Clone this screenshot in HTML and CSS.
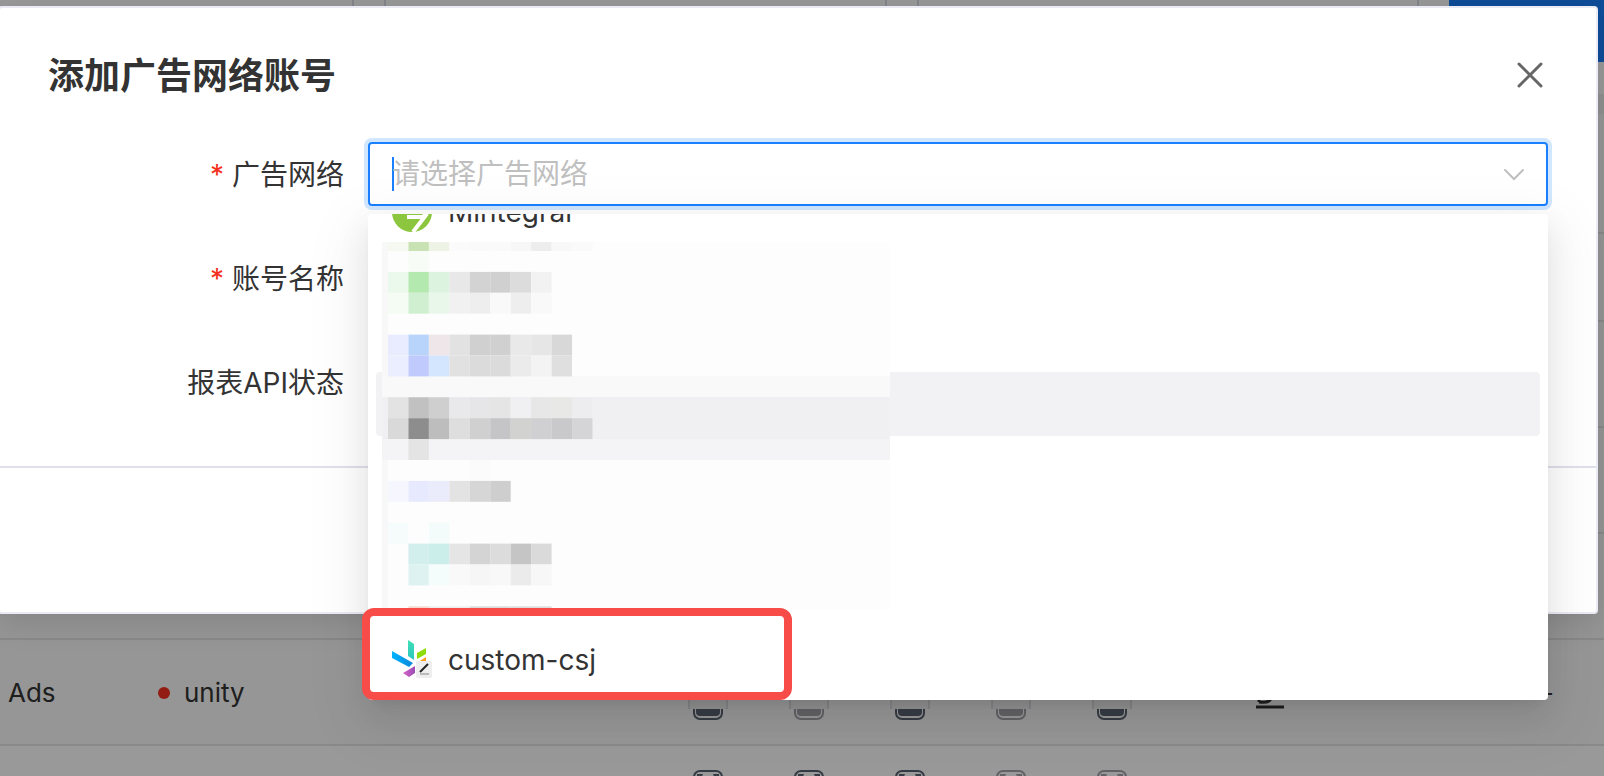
FILE: index.html
```
<!DOCTYPE html>
<html lang="zh-CN">
<head>
<meta charset="UTF-8">
<meta name="viewport" content="width=device-width, initial-scale=1.0">
<title>添加广告网络账号</title>
<link rel="stylesheet" href="styles.css">
</head>
<body>
    <svg width="0" height="0" class="sprite">
        <symbol id="device" viewBox="0 0 40 56">
            <rect x="6" y="1" width="28" height="54" rx="6" fill="none" stroke="currentColor" stroke-width="2"/>
            <path d="M9 4h6q-1 4-6 5zM31 4h-6q1 4 6 5z" fill="currentColor"/>
            <path d="M8 40h24v8q0 4-4 4H12q-4 0-4-4z" fill="currentColor"/>
            <path d="M0 10h40v35H0z" fill="#f4f4f4"/>
            <path d="M1 10v35M39 10v35" stroke="#dcdce2" stroke-width="2"/>
        </symbol>
    </svg>

    <!-- Page behind the dialog -->
    <div class="page">
        <div class="filters">
            <input type="text" class="filter first" aria-label="filter 1">
            <input type="text" class="filter" aria-label="filter 2">
            <input type="text" class="filter" aria-label="filter 3">
            <button type="button" class="btn-search" aria-label="search"></button>
        </div>
        <div class="panel">
            <table class="accounts">
                <colgroup>
                    <col class="col-name"><col class="col-account">
                    <col class="col-icon"><col class="col-icon"><col class="col-icon"><col class="col-icon"><col class="col-icon">
                    <col class="col-edit"><col>
                </colgroup>
                <tr class="toolbar"><td colspan="9"></td></tr>
                <tr class="head"><td colspan="9"></td></tr>
                <tr><td colspan="9"></td></tr>
                <tr><td colspan="9"></td></tr>
                <tr><td colspan="9"></td></tr>
                <tr>
                    <td class="name">Unity Ads</td>
                    <td><span class="dot"></span>unity</td>
                    <td class="icon"><svg><use href="#device"/></svg></td>
                    <td class="icon off"><svg><use href="#device"/></svg></td>
                    <td class="icon"><svg><use href="#device"/></svg></td>
                    <td class="icon off"><svg><use href="#device"/></svg></td>
                    <td class="icon"><svg><use href="#device"/></svg></td>
                    <td class="edit"><svg width="30" height="34" viewBox="0 0 30 34"><path d="M4 27V20L20 4l7 7-13 15q-3 2-10 1M1 32h28" fill="none" stroke="#333" stroke-width="3"/></svg></td>
                    <td class="more">—</td>
                </tr>
                <tr>
                    <td></td>
                    <td></td>
                    <td class="icon"><svg><use href="#device"/></svg></td>
                    <td class="icon"><svg><use href="#device"/></svg></td>
                    <td class="icon"><svg><use href="#device"/></svg></td>
                    <td class="icon off"><svg><use href="#device"/></svg></td>
                    <td class="icon off"><svg><use href="#device"/></svg></td>
                    <td></td>
                    <td></td>
                </tr>
            </table>
        </div>
    </div>

    <div class="mask">
        <div class="dialog" role="dialog" aria-labelledby="dialogTitle">
            <div class="dialog-header">
                <h2 id="dialogTitle">添加广告网络账号</h2>
                <button type="button" class="close" aria-label="关闭">
                    <svg width="26" height="26" viewBox="0 0 26 26"><path d="M2 2l22 22M24 2L2 24" stroke="#666" stroke-width="3" stroke-linecap="round"/></svg>
                </button>
            </div>
            <form>
                <div class="form-item">
                    <label for="network" class="required">广告网络</label>
                    <div class="control">
                        <div class="select">
                            <input type="text" id="network" role="combobox" aria-expanded="true" aria-controls="networkList" placeholder="请选择广告网络">
                            <svg width="22" height="14" viewBox="0 0 22 14"><path d="M2 3l9 9 9-9" fill="none" stroke="#bfbfbf" stroke-width="2" stroke-linecap="round"/></svg>
                        </div>
                        <div class="dropdown">
                            <ul id="networkList" role="listbox">
                                <li role="option">
                                    <svg width="40" height="40" viewBox="0 0 40 40"><circle cx="20" cy="20" r="20" fill="#8cc63f"/><path d="M15 25h17M24 14l10 9-13 17" fill="none" stroke="#fff" stroke-width="4"/></svg>
                                    Mintegral
                                </li>
                                <li role="option"></li>
                                <li role="option"></li>
                                <li role="option" class="active"></li>
                                <li role="option"></li>
                                <li role="option"></li>
                                <li role="option"></li>
                                <li role="option">
                                    <svg width="40" height="40" viewBox="0 0 40 40">
                                        <defs>
                                            <linearGradient id="g1" x2="0" y2="1"><stop stop-color="#3fe0b4"/><stop offset="1" stop-color="#2cc5c0"/></linearGradient>
                                            <linearGradient id="g2"><stop stop-color="#00b4ff"/><stop offset="1" stop-color="#0a86d8"/></linearGradient>
                                            <linearGradient id="g3"><stop stop-color="#d765c8"/><stop offset="1" stop-color="#9a4bb5"/></linearGradient>
                                        </defs>
                                        <path d="M16 0l6 4v16l-6-4z" fill="url(#g1)"/>
                                        <path d="M0 11l21 12-4 4L0 18z" fill="url(#g2)"/>
                                        <path d="M25 13l9-5v6l-9 5z" fill="#8ddc0c"/>
                                        <path d="M28 21l6-4v5z" fill="#ff9c1a"/>
                                        <path d="M11 33l12-7v7l-6 4z" fill="url(#g3)"/>
                                        <rect x="24" y="21" width="16" height="17" rx="2" fill="#eee"/>
                                        <path d="M28 32l8-8" stroke="#222" stroke-width="2"/>
                                        <path d="M28 34h9" stroke="#888"/>
                                    </svg>
                                    custom-csj
                                </li>
                            </ul>
                            <svg class="mosaic" width="508" height="367" viewBox="0 0 508 367">
                                <rect width="508" height="367" fill="#fdfdfd"/>
                                <rect width="6" height="367" fill="#f8f8f8"/>
                                <rect y="134" width="508" height="21" fill="#f9f9f9"/>
                                <rect y="155" width="508" height="42" fill="#f0f0f2"/>
                                <rect y="197" width="508" height="21" fill="#f4f4f6"/>
                                <g id="blocks" transform="translate(6 9) scale(20.45 20.9)"></g>
                            </svg>
                            <div class="highlight"></div>
                        </div>
                    </div>
                </div>
                <div class="form-item">
                    <label for="account" class="required">账号名称</label>
                    <div class="control"><input type="text" id="account" class="field"></div>
                </div>
                <div class="form-item">
                    <label for="api">报表API状态</label>
                    <div class="control"><input type="checkbox" id="api"></div>
                </div>
            </form>
            <div class="dialog-footer"></div>
        </div>
    </div>
    <script src="blocks.js"></script>
</body>
</html>
```

FILE: blocks.js
```
// one entry per row of blocks: row number, then a colour per column (- = none)
var rows = [
    [-1, '#f6f9f1 #c9e2b3 #edf4e5 #fbfbfb #fafafa #fafafa #f7f7f7 #ededed #f8f8f8 #fafafa'],
    [0, '- #f8fcf7'],
    [1, '#ebf8ec #b3e8ae #dcf3df #e8e8e8 #d3d3d3 #d0d0d0 #dcdcdc #f2f2f2'],
    [2, '#f4fcf4 #d0efd0 #e9f7eb #f1f1f1 #eeeeee #f9f9f9 #eeeeee #f9f9f9'],
    [4, '#e8ecfe #b9d4fa #eee6e8 #e2e2e2 #d0d0d0 #d0d0d0 #e9e9e9 #e6e6e6 #d8d8d8'],
    [5, '#ebeefe #c0cafc #d3e6fd #e1e1e1 #dbdbdb #dbdbdb #ebebeb #f3f3f3 #dfdfdf'],
    [7, '#e3e3e4 #c1c1c1 #cfcfd0 #e9e9eb #e6e6e8 #e5e5e6 #f0f0f2 #e7e7e8 #e8e8e7 #ededef'],
    [8, '#d9d9da #8d8d8d #bdbdbd #dededf #d0d0d1 #c5c5c7 #d2d2d1 #d0d0d2 #c9c9cb #d5d5d7'],
    [9, '#f4f4f6 #e4e4e5'],
    [10, '- - - - #fbfbfb'],
    [11, '#f5f6fe #e7eafe #eaecfc #e3e3e3 #d6d6d6 #cecece'],
    [13, '#f6fcfc - #f4fcfb'],
    [14, '- #d3efed #cbeeeb #e5e5e5 #d4d4d4 #dcdcdc #c5c5c5 #dadada'],
    [15, '- #def3f1 #f5fdfc #f9f9f9 #f6f6f6 #f8f8f8 #ebebeb #f7f7f7'],
    [17, '- #f3d9d2 #ededed #ededed #dadada #dadada #dcdcdc #dddddd']
];

var blocks = document.getElementById('blocks');
rows.forEach(function(row) {
    row[1].split(' ').forEach(function(color, i) {
        if (color === '-') return;
        var rect = document.createElementNS('http://www.w3.org/2000/svg', 'rect');
        var top = row[0] === -1;
        rect.setAttribute('x', i);
        rect.setAttribute('y', top ? -0.45 : row[0]);
        rect.setAttribute('width', 1);
        rect.setAttribute('height', top ? 0.45 : 1);
        rect.setAttribute('fill', color);
        blocks.appendChild(rect);
    });
});
```

FILE: styles.css
```
* {
    box-sizing: border-box;
}
body {
    margin: 0;
    font-family: Inter, "Noto Sans CJK SC", sans-serif;
    font-size: 28px;
    color: #333;
    height: 100vh;
    overflow: hidden;
    position: relative;
}
input, button {
    font: inherit;
}
.sprite {
    position: absolute;
}

/* page */
.page {
    height: 100vh;
    overflow: hidden;
    background: #f0f0f0;
}
.filters {
    display: flex;
    gap: 30px;
    height: 94px;
    padding-bottom: 32px;
    background: #fff;
}
.filter {
    flex: 502 1 0;
    min-width: 0;
    height: 6px;
    padding: 0;
    border: 2px solid #dcdee6;
    border-top: none;
    border-bottom: none;
    border-radius: 0;
}
.filter.first {
    flex-grow: 355;
    border-left: none;
}
.btn-search {
    flex: 156 1 0;
    padding: 0;
    border: none;
    background: #1a80ff;
}
.panel {
    margin-top: 20px;
    background: #fff;
}
.accounts {
    width: calc(100% + 80px);
    margin-left: -80px;
    table-layout: fixed;
    border-collapse: collapse;
    font-size: 26px;
}
.accounts td {
    height: 106px;
    padding: 0;
    border-bottom: 2px solid #e4e4e8;
    background: #fafafa;
}
.accounts tr:last-child td {
    background: #fff;
}
.accounts .toolbar td {
    height: 119px;
}
.accounts .head td {
    height: 88px;
}
.col-name {
    width: 238px;
}
.col-account {
    width: 499px;
}
.col-icon {
    width: 101px;
}
.col-edit {
    width: 216px;
}
.accounts .name {
    padding-left: 16px;
}
.accounts .more {
    padding-left: 148px;
}
.dot {
    display: inline-block;
    width: 12px;
    height: 12px;
    margin-right: 14px;
    border-radius: 50%;
    background: #f5301e;
    vertical-align: 3px;
}
.icon {
    text-align: center;
    color: #5a6474;
}
.icon.off {
    color: #a4a4ac;
}
.icon svg {
    display: block;
    width: 40px;
    height: 56px;
    margin: 0 auto;
}
.edit svg {
    display: block;
    margin: 0 auto;
}

/* dialog */
.mask {
    position: absolute;
    inset: 0;
    padding: 6px 6px 0 0;
    background: rgba(0, 0, 0, 0.4);
}
.dialog {
    margin-left: -2px;
    border: 2px solid #ebebf5;
    border-radius: 4px;
    background: #fff;
    box-shadow: 0 8px 32px rgba(0, 0, 0, 0.12);
}
.dialog-header {
    display: flex;
    align-items: center;
    justify-content: space-between;
    height: 134px;
    padding: 0 53px 0 48px;
}
.dialog-header h2 {
    margin: 0;
    padding-bottom: 4px;
    font-size: 36px;
    font-weight: 600;
}
.close {
    display: flex;
    padding: 0;
    border: none;
    background: none;
}
form {
    display: flex;
    flex-direction: column;
    gap: 40px;
    padding: 0 48px 52px 0;
}
.form-item {
    display: flex;
    align-items: center;
    height: 64px;
}
.form-item label {
    width: 368px;
    padding: 0 24px 2px 0;
    text-align: right;
}
.required::before {
    content: "*";
    margin-right: 8px;
    color: #f5301e;
}
.control {
    flex: 1;
    position: relative;
}
.select {
    display: flex;
    align-items: center;
    height: 64px;
    padding: 0 21px 0 22px;
    border: 2px solid #1a80ff;
    border-radius: 4px;
    box-shadow: 0 0 0 4px #d1e6ff;
}
.select input {
    flex: 1;
    height: 34px;
    padding: 0;
    border: none;
    outline: none;
    background: linear-gradient(#1a80ff, #1a80ff) no-repeat left / 2px 100%;
}
.select input::placeholder {
    color: #bfbfbf;
}
.field {
    width: 100%;
    height: 64px;
    border: 2px solid #dcdee6;
    border-radius: 4px;
}
.dialog-footer {
    height: 146px;
    border-top: 2px solid #dfe0ec;
}

/* dropdown */
.dropdown {
    position: absolute;
    top: 72px;
    left: 0;
    right: 0;
    z-index: 1;
    height: 486px;
    border-radius: 4px;
    background: #fff;
    box-shadow: 0 6px 12px -8px rgba(0, 0, 0, 0.12), 0 12px 32px rgba(0, 0, 0, 0.08), 0 18px 56px 16px rgba(0, 0, 0, 0.05);
}
.dropdown ul {
    display: flex;
    flex-direction: column;
    justify-content: flex-end;
    height: 100%;
    margin: 0;
    padding: 0 8px 8px;
    overflow: hidden;
    list-style: none;
}
.dropdown li {
    display: flex;
    flex: none;
    align-items: center;
    gap: 16px;
    height: 64px;
    padding: 0 16px;
    border-radius: 4px;
}
.dropdown li.active {
    background: #f2f2f4;
}
.mosaic {
    position: absolute;
    top: 28px;
    left: 14px;
}
.highlight {
    position: absolute;
    bottom: 0;
    left: -6px;
    width: 430px;
    height: 92px;
    border: 8px solid #f74c48;
    border-radius: 12px;
}
```
